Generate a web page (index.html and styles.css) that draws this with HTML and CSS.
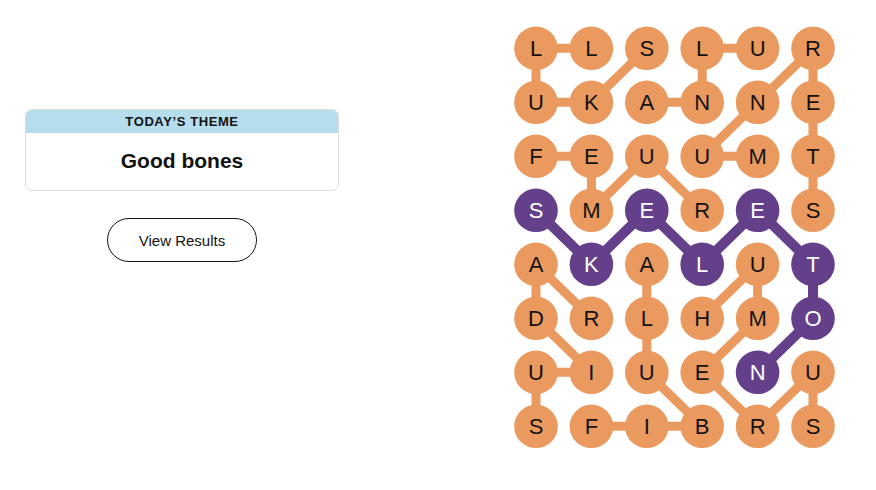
FILE: index.html
```
<!DOCTYPE html>
<html lang="en">
<head>
<meta charset="utf-8">
<title>Strands</title>
<link rel="stylesheet" href="styles.css">
</head>
<body>
<div class="page">
  <div class="left">
    <div class="theme-card">
      <div class="theme-head">TODAY’S THEME</div>
      <div class="theme-body">Good bones</div>
    </div>
    <button class="results-btn">View Results</button>
  </div>
  <svg class="board" width="340" height="440" viewBox="0 0 340 440">
    <path class="link" d="M36 28.3H91.4 M36 28.3V82.3 M36 82.3H91.4 M91.4 82.3L146.8 28.3 M202.2 28.3H257.6 M202.2 28.3V82.3 M146.8 82.3H202.2 M313 28.3L257.6 82.3 M257.6 82.3L202.2 136.3 M202.2 136.3H257.6 M313 28.3V190.3 M36 136.3H91.4 M91.4 136.3V190.3 M91.4 190.3L146.8 136.3 M146.8 136.3L202.2 190.3 M36 244.3V298.3 M36 244.3L91.4 298.3 M36 298.3L91.4 352.3 M36 352.3H91.4 M36 352.3V406.3 M146.8 244.3V352.3 M146.8 352.3L202.2 406.3 M91.4 406.3H202.2 M257.6 244.3L202.2 298.3 M257.6 244.3V298.3 M257.6 298.3L202.2 352.3 M202.2 352.3L257.6 406.3 M257.6 406.3L313 352.3 M313 352.3V406.3"/>
    <polyline class="link-span" points="36,190.3 91.4,244.3 146.8,190.3 202.2,244.3 257.6,190.3 313,244.3 313,298.3 257.6,352.3"/>

    <g class="cells">
      <circle cx="36" cy="28.3" r="21.8"/><circle cx="91.4" cy="28.3" r="21.8"/><circle cx="146.8" cy="28.3" r="21.8"/><circle cx="202.2" cy="28.3" r="21.8"/><circle cx="257.6" cy="28.3" r="21.8"/><circle cx="313" cy="28.3" r="21.8"/>
      <circle cx="36" cy="82.3" r="21.8"/><circle cx="91.4" cy="82.3" r="21.8"/><circle cx="146.8" cy="82.3" r="21.8"/><circle cx="202.2" cy="82.3" r="21.8"/><circle cx="257.6" cy="82.3" r="21.8"/><circle cx="313" cy="82.3" r="21.8"/>
      <circle cx="36" cy="136.3" r="21.8"/><circle cx="91.4" cy="136.3" r="21.8"/><circle cx="146.8" cy="136.3" r="21.8"/><circle cx="202.2" cy="136.3" r="21.8"/><circle cx="257.6" cy="136.3" r="21.8"/><circle cx="313" cy="136.3" r="21.8"/>
      <circle class="span" cx="36" cy="190.3" r="21.8"/><circle cx="91.4" cy="190.3" r="21.8"/><circle class="span" cx="146.8" cy="190.3" r="21.8"/><circle cx="202.2" cy="190.3" r="21.8"/><circle class="span" cx="257.6" cy="190.3" r="21.8"/><circle cx="313" cy="190.3" r="21.8"/>
      <circle cx="36" cy="244.3" r="21.8"/><circle class="span" cx="91.4" cy="244.3" r="21.8"/><circle cx="146.8" cy="244.3" r="21.8"/><circle class="span" cx="202.2" cy="244.3" r="21.8"/><circle cx="257.6" cy="244.3" r="21.8"/><circle class="span" cx="313" cy="244.3" r="21.8"/>
      <circle cx="36" cy="298.3" r="21.8"/><circle cx="91.4" cy="298.3" r="21.8"/><circle cx="146.8" cy="298.3" r="21.8"/><circle cx="202.2" cy="298.3" r="21.8"/><circle cx="257.6" cy="298.3" r="21.8"/><circle class="span" cx="313" cy="298.3" r="21.8"/>
      <circle cx="36" cy="352.3" r="21.8"/><circle cx="91.4" cy="352.3" r="21.8"/><circle cx="146.8" cy="352.3" r="21.8"/><circle cx="202.2" cy="352.3" r="21.8"/><circle class="span" cx="257.6" cy="352.3" r="21.8"/><circle cx="313" cy="352.3" r="21.8"/>
      <circle cx="36" cy="406.3" r="21.8"/><circle cx="91.4" cy="406.3" r="21.8"/><circle cx="146.8" cy="406.3" r="21.8"/><circle cx="202.2" cy="406.3" r="21.8"/><circle cx="257.6" cy="406.3" r="21.8"/><circle cx="313" cy="406.3" r="21.8"/>
    </g>

    <g class="letters">
      <text x="36" y="36.3">L</text><text x="91.4" y="36.3">L</text><text x="146.8" y="36.3">S</text><text x="202.2" y="36.3">L</text><text x="257.6" y="36.3">U</text><text x="313" y="36.3">R</text>
      <text x="36" y="90.3">U</text><text x="91.4" y="90.3">K</text><text x="146.8" y="90.3">A</text><text x="202.2" y="90.3">N</text><text x="257.6" y="90.3">N</text><text x="313" y="90.3">E</text>
      <text x="36" y="144.3">F</text><text x="91.4" y="144.3">E</text><text x="146.8" y="144.3">U</text><text x="202.2" y="144.3">U</text><text x="257.6" y="144.3">M</text><text x="313" y="144.3">T</text>
      <text class="on" x="36" y="198.3">S</text><text x="91.4" y="198.3">M</text><text class="on" x="146.8" y="198.3">E</text><text x="202.2" y="198.3">R</text><text class="on" x="257.6" y="198.3">E</text><text x="313" y="198.3">S</text>
      <text x="36" y="252.3">A</text><text class="on" x="91.4" y="252.3">K</text><text x="146.8" y="252.3">A</text><text class="on" x="202.2" y="252.3">L</text><text x="257.6" y="252.3">U</text><text class="on" x="313" y="252.3">T</text>
      <text x="36" y="306.3">D</text><text x="91.4" y="306.3">R</text><text x="146.8" y="306.3">L</text><text x="202.2" y="306.3">H</text><text x="257.6" y="306.3">M</text><text class="on" x="313" y="306.3">O</text>
      <text x="36" y="360.3">U</text><text x="91.4" y="360.3">I</text><text x="146.8" y="360.3">U</text><text x="202.2" y="360.3">E</text><text class="on" x="257.6" y="360.3">N</text><text x="313" y="360.3">U</text>
      <text x="36" y="414.3">S</text><text x="91.4" y="414.3">F</text><text x="146.8" y="414.3">I</text><text x="202.2" y="414.3">B</text><text x="257.6" y="414.3">R</text><text x="313" y="414.3">S</text>
    </g>
  </svg>
</div>
</body>
</html>
```
FILE: styles.css
```
html, body {
  margin: 0;
  padding: 0;
  background: #ffffff;
}

body {
  font-family: "Liberation Sans", Arial, sans-serif;
  color: #121212;
}

.page {
  display: flex;
  align-items: flex-start;
  padding-left: 25px;
}

.left {
  width: 314px;
  padding-top: 109px;
  display: flex;
  flex-direction: column;
  align-items: center;
}

.theme-card {
  width: 100%;
  box-sizing: border-box;
  border: 1px solid #dcdcdc;
  border-radius: 7px;
  overflow: hidden;
}

.theme-head {
  height: 23px;
  background: #b5ddeb;
  font-size: 13px;
  font-weight: 700;
  letter-spacing: 0.6px;
  line-height: 24px;
  text-align: center;
  color: #121212;
}

.theme-body {
  height: 57px;
  font-size: 21px;
  font-weight: 700;
  line-height: 56px;
  text-align: center;
}

.results-btn {
  margin-top: 27px;
  width: 150px;
  height: 44px;
  box-sizing: border-box;
  border: 1px solid #121212;
  border-radius: 22px;
  background: #ffffff;
  font-family: "Liberation Sans", Arial, sans-serif;
  font-size: 15px;
  color: #121212;
  padding: 0;
}

.board {
  display: block;
  margin-left: 161px;
  margin-top: 20px;
}

.link {
  fill: none;
  stroke: #eb9a5f;
  stroke-width: 9;
  stroke-linecap: round;
}

.link-span {
  fill: none;
  stroke: #643f8a;
  stroke-width: 10;
  stroke-linejoin: round;
  stroke-linecap: round;
}

.cells circle {
  fill: #eb9a5f;
}

.cells circle.span {
  fill: #643f8a;
}

.letters text {
  font-family: "Liberation Sans", Arial, sans-serif;
  font-size: 22px;
  fill: #121212;
  text-anchor: middle;
}

.letters text.on {
  fill: #ffffff;
}
```
